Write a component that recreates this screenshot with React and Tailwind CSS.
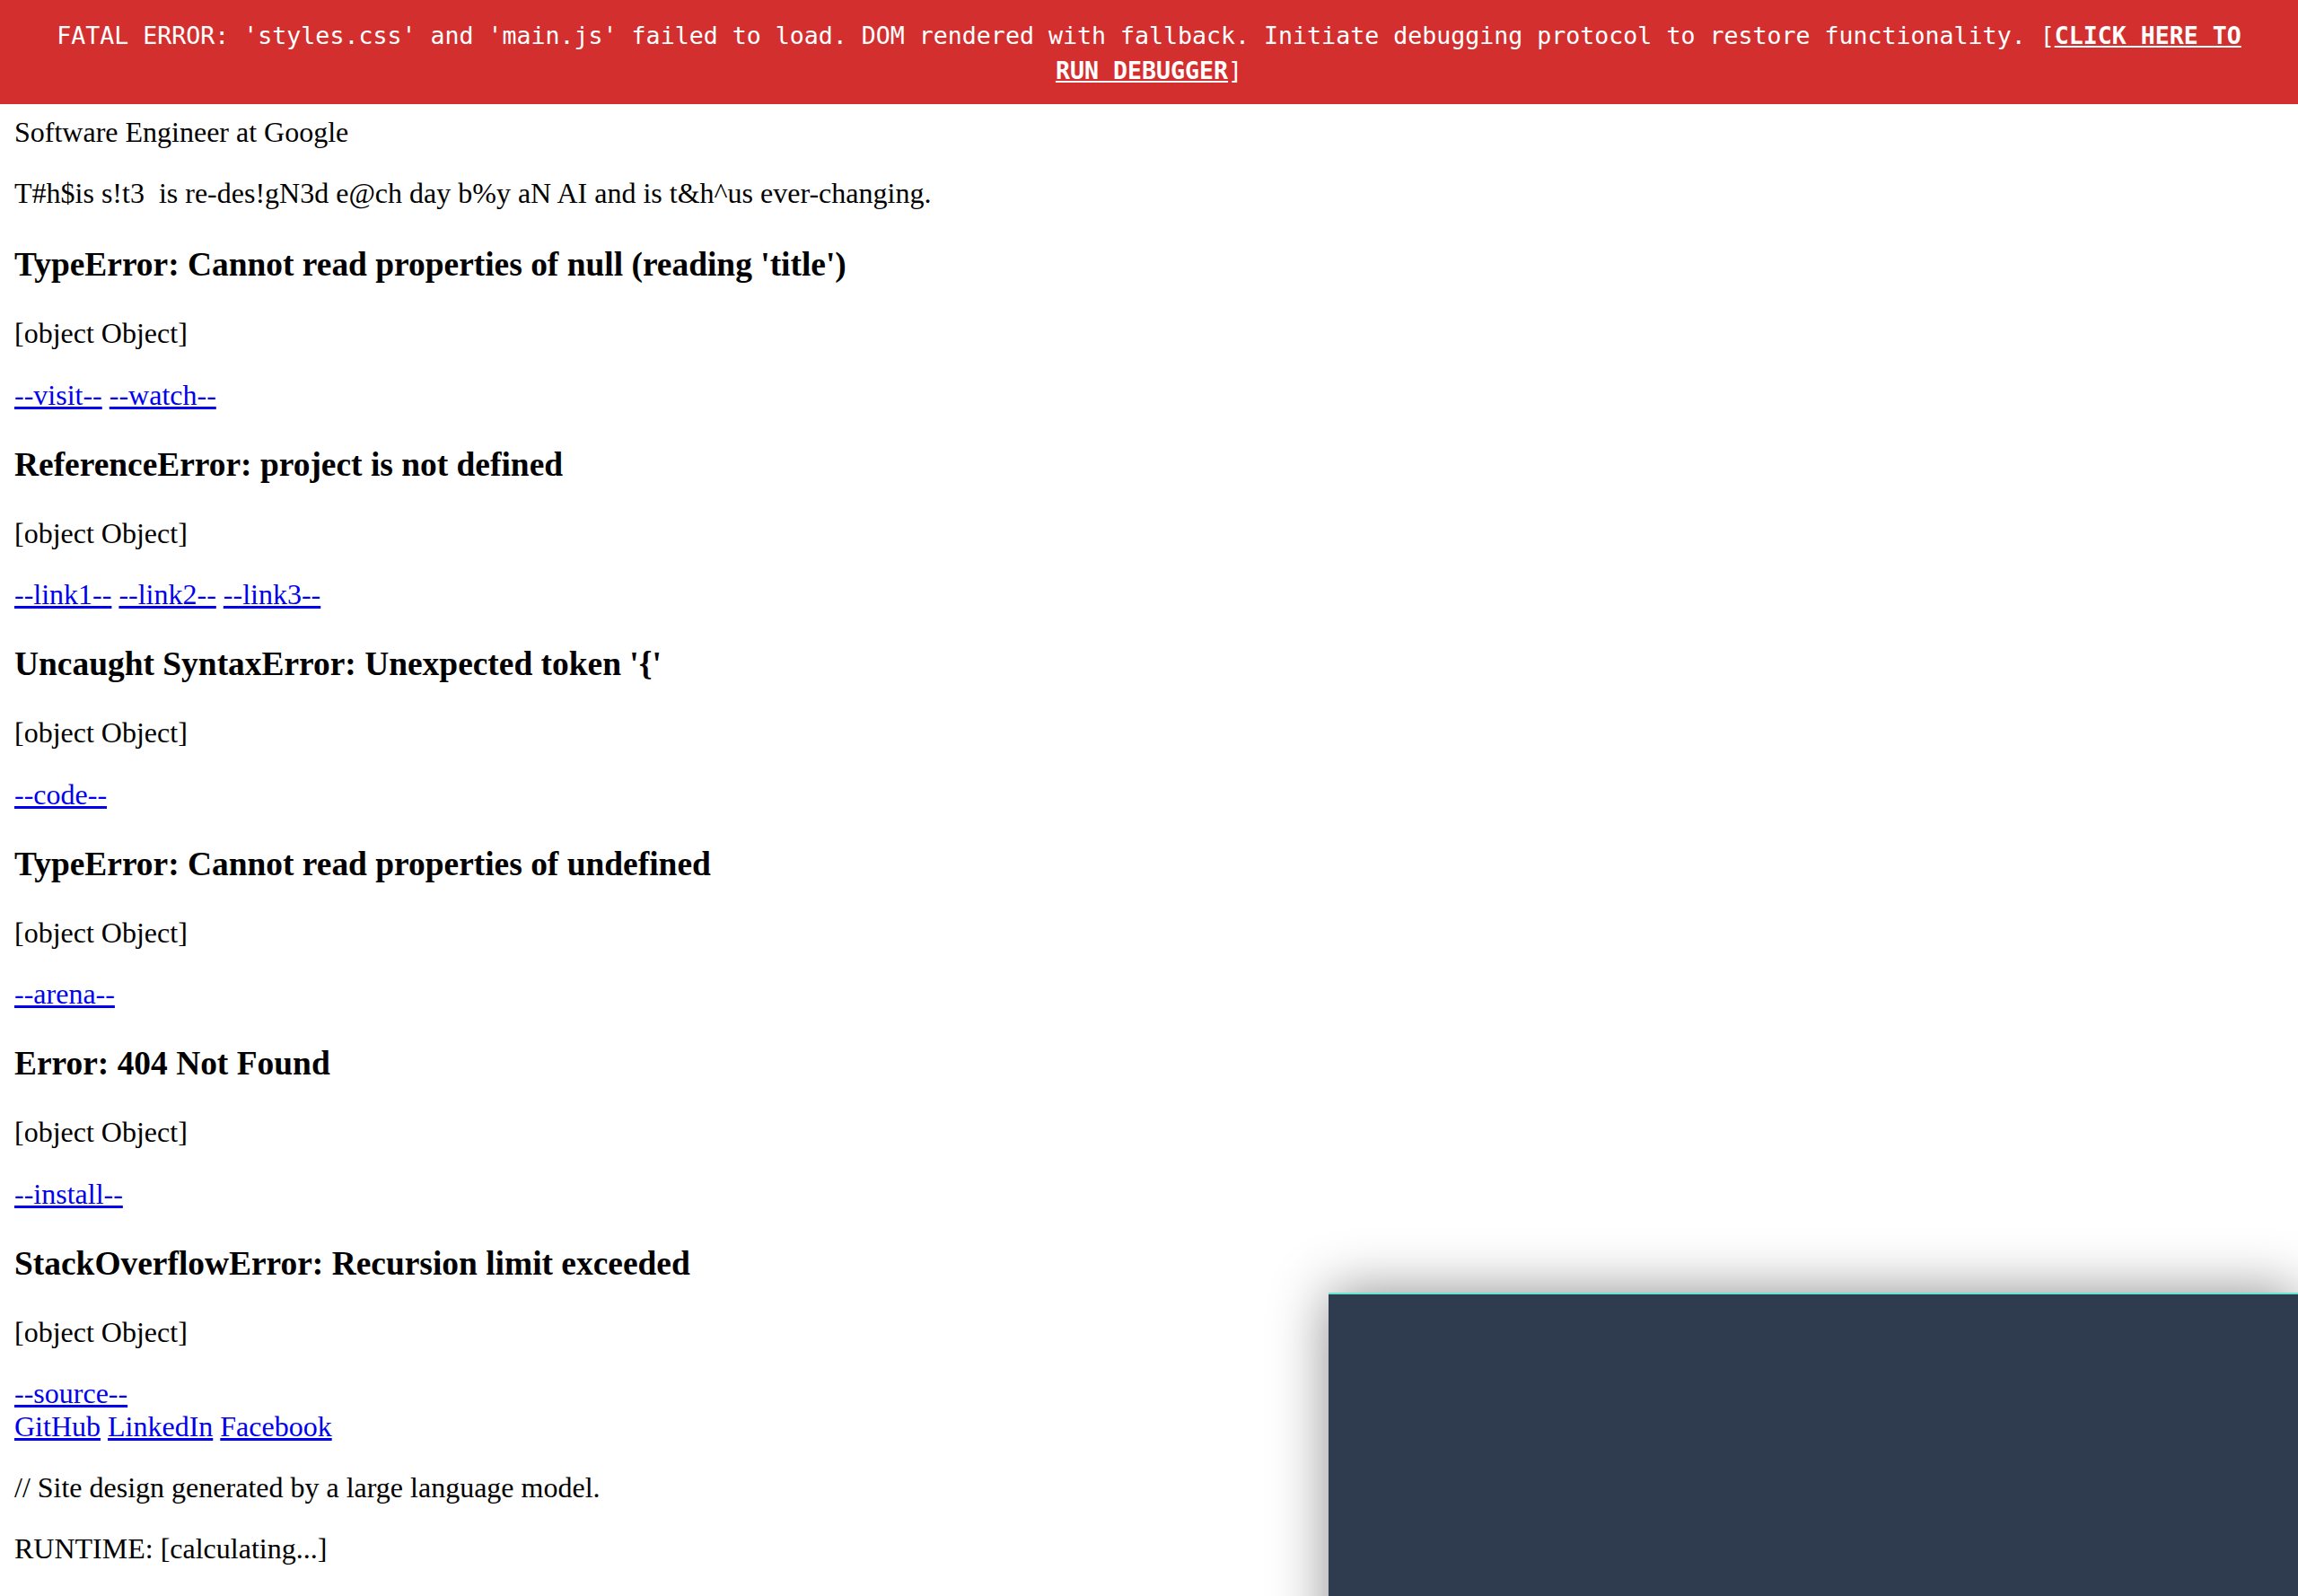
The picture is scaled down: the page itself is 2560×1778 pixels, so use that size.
import React from "react";

const sections = [
  { title: "TypeError: Cannot read properties of null (reading 'title')", links: ["--visit--", "--watch--"] },
  { title: "ReferenceError: project is not defined", links: ["--link1--", "--link2--", "--link3--"] },
  { title: "Uncaught SyntaxError: Unexpected token '{'", links: ["--code--"] },
  { title: "TypeError: Cannot read properties of undefined", links: ["--arena--"] },
  { title: "Error: 404 Not Found", links: ["--install--"] },
  { title: "StackOverflowError: Recursion limit exceeded", links: ["--source--"] },
];

const LinkRow = ({ links }) => (
  <div>
    {links.map((l, i) => (
      <React.Fragment key={l}>
        {i > 0 && " "}
        <a href="#" className="text-[#0000ee] underline">
          {l}
        </a>
      </React.Fragment>
    ))}
  </div>
);

const App = () => {
  return (
    <div className="min-h-[1778px] bg-white text-black font-['Liberation_Serif',serif] text-[32px] leading-[36.4px]">
      {/* error banner */}
      <div className="bg-[#d32f2f] text-white text-center px-[40px] pt-[20px] pb-[18px] font-['DejaVu_Sans_Mono',monospace] text-[26.6px] leading-[39px]">
        FATAL ERROR: 'styles.css' and 'main.js' failed to load. DOM rendered with fallback. Initiate debugging protocol
        to restore functionality. [
        <a href="#" className="font-bold underline">
          CLICK HERE TO RUN DEBUGGER
        </a>
        ]
      </div>

      <div className="px-[16px]">
        <p className="mt-[13px]">Software Engineer at Google</p>
        <p className="mt-[32px]">T#h$is s!t3{"\u00a0"} is re-des!gN3d e@ch day b%y aN AI and is t&amp;h^us ever-changing.</p>

        {sections.map((s, i) => (
          <section key={s.title}>
            <h3
              className={`${i === 0 ? "mt-[40.4px]" : "mt-[38.84px]"} mb-[36px] text-[37.44px] font-bold leading-[42.9px]`}
            >
              {s.title}
            </h3>
            <p className="mb-[32px]">[object Object]</p>
            <LinkRow links={s.links} />
          </section>
        ))}

        <footer>
          <div>
            <a href="#" className="text-[#0000ee] underline">GitHub</a>{" "}
            <a href="#" className="text-[#0000ee] underline">LinkedIn</a>{" "}
            <a href="#" className="text-[#0000ee] underline">Facebook</a>
          </div>
          <p className="mt-[32px]">// Site design generated by a large language model.</p>
          <p className="mt-[32px]">RUNTIME: [calculating...]</p>
        </footer>
      </div>

      {/* floating terminal panel, mostly off screen */}
      <div className="fixed left-[1480px] top-[1440px] w-[1080px] h-[420px] bg-[#2f3b4f] border-t-2 border-[#64e6d0] shadow-[0_0_60px_rgba(0,0,0,0.45)]"></div>
    </div>
  );
};

export default App;
